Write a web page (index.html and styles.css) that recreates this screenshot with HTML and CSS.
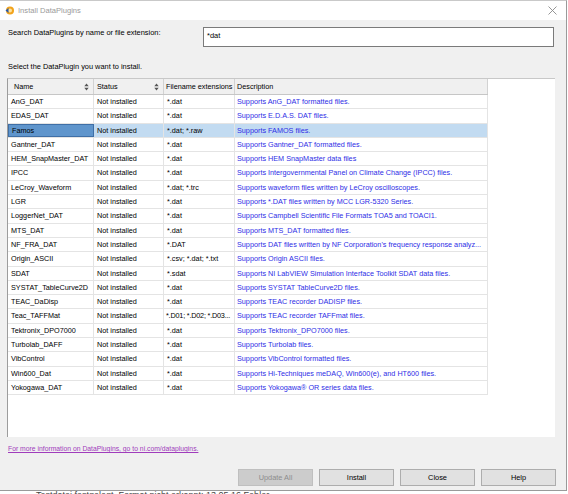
FILE: index.html
```html
<!DOCTYPE html>
<html>
<head>
<meta charset="utf-8">
<title>Install DataPlugins</title>
<link rel="stylesheet" href="styles.css">
</head>
<body>
<div class="window">
  <div class="titlebar">
    <svg class="app-icon" width="9" height="9" viewBox="0 0 9 9">
      <circle cx="5" cy="4.5" r="4" fill="#f2a31b"/>
      <circle cx="5" cy="4.5" r="2" fill="#fde2a0"/>
      <path d="M0.5 4.5 L3.5 2 L3.5 7 Z" fill="#2a5aa8"/>
    </svg>
    <span class="title">Install DataPlugins</span>
    <svg class="close" width="9" height="9" viewBox="0 0 9 9">
      <path d="M0.5 0.5 L8.5 8.5 M8.5 0.5 L0.5 8.5" stroke="#8a8a8a" stroke-width="0.9" fill="none"/>
    </svg>
  </div>
  <div class="content">
    <div class="search-row">
      <span class="search-label">Search DataPlugins by name or file extension:</span>
      <div class="search-input">*dat</div>
    </div>
    <div class="select-label">Select the DataPlugin you want to install.</div>
    <div class="list">
      <div class="row head">
        <div class="cell c-name">Name<svg class="sort" width="5" height="8" viewBox="0 0 5 8"><path d="M2.5 0.5 L4.7 3.2 L0.3 3.2 Z M2.5 7.5 L4.7 4.8 L0.3 4.8 Z" fill="#555"/></svg></div>
        <div class="cell c-status">Status<svg class="sort" width="5" height="8" viewBox="0 0 5 8"><path d="M2.5 0.5 L4.7 3.2 L0.3 3.2 Z M2.5 7.5 L4.7 4.8 L0.3 4.8 Z" fill="#555"/></svg></div>
        <div class="cell c-ext">Filename extensions</div>
        <div class="cell c-desc">Description</div>
      </div>
      <div class="row"><div class="cell c-name">AnG_DAT</div><div class="cell c-status">Not installed</div><div class="cell c-ext">*.dat</div><div class="cell c-desc">Supports AnG_DAT formatted files.</div></div>
      <div class="row"><div class="cell c-name">EDAS_DAT</div><div class="cell c-status">Not installed</div><div class="cell c-ext">*.dat</div><div class="cell c-desc">Supports E.D.A.S. DAT files.</div></div>
      <div class="row selected"><div class="cell c-name focus">Famos</div><div class="cell c-status">Not installed</div><div class="cell c-ext">*.dat; *.raw</div><div class="cell c-desc">Supports FAMOS files.</div></div>
      <div class="row"><div class="cell c-name">Gantner_DAT</div><div class="cell c-status">Not installed</div><div class="cell c-ext">*.dat</div><div class="cell c-desc">Supports Gantner_DAT formatted files.</div></div>
      <div class="row"><div class="cell c-name">HEM_SnapMaster_DAT</div><div class="cell c-status">Not installed</div><div class="cell c-ext">*.dat</div><div class="cell c-desc">Supports HEM SnapMaster data files</div></div>
      <div class="row"><div class="cell c-name">IPCC</div><div class="cell c-status">Not installed</div><div class="cell c-ext">*.dat</div><div class="cell c-desc">Supports Intergovernmental Panel on Climate Change (IPCC) files.</div></div>
      <div class="row"><div class="cell c-name">LeCroy_Waveform</div><div class="cell c-status">Not installed</div><div class="cell c-ext">*.dat; *.trc</div><div class="cell c-desc">Supports waveform files written by LeCroy oscilloscopes.</div></div>
      <div class="row"><div class="cell c-name">LGR</div><div class="cell c-status">Not installed</div><div class="cell c-ext">*.dat</div><div class="cell c-desc">Supports *.DAT files written by MCC LGR-5320 Series.</div></div>
      <div class="row"><div class="cell c-name">LoggerNet_DAT</div><div class="cell c-status">Not installed</div><div class="cell c-ext">*.dat</div><div class="cell c-desc">Supports Campbell Scientific File Formats TOA5 and TOACI1.</div></div>
      <div class="row"><div class="cell c-name">MTS_DAT</div><div class="cell c-status">Not installed</div><div class="cell c-ext">*.dat</div><div class="cell c-desc">Supports MTS_DAT formatted files.</div></div>
      <div class="row"><div class="cell c-name">NF_FRA_DAT</div><div class="cell c-status">Not installed</div><div class="cell c-ext">*.DAT</div><div class="cell c-desc">Supports DAT files written by NF Corporation's frequency response analyz...</div></div>
      <div class="row"><div class="cell c-name">Origin_ASCII</div><div class="cell c-status">Not installed</div><div class="cell c-ext">*.csv; *.dat; *.txt</div><div class="cell c-desc">Supports Origin ASCII files.</div></div>
      <div class="row"><div class="cell c-name">SDAT</div><div class="cell c-status">Not installed</div><div class="cell c-ext">*.sdat</div><div class="cell c-desc">Supports NI LabVIEW Simulation Interface Toolkit SDAT data files.</div></div>
      <div class="row"><div class="cell c-name">SYSTAT_TableCurve2D</div><div class="cell c-status">Not installed</div><div class="cell c-ext">*.dat</div><div class="cell c-desc">Supports SYSTAT TableCurve2D files.</div></div>
      <div class="row"><div class="cell c-name">TEAC_DaDisp</div><div class="cell c-status">Not installed</div><div class="cell c-ext">*.dat</div><div class="cell c-desc">Supports TEAC recorder DADISP files.</div></div>
      <div class="row"><div class="cell c-name">Teac_TAFFMat</div><div class="cell c-status">Not installed</div><div class="cell c-ext tight">*.D01; *.D02; *.D03...</div><div class="cell c-desc">Supports TEAC recorder TAFFmat files.</div></div>
      <div class="row"><div class="cell c-name">Tektronix_DPO7000</div><div class="cell c-status">Not installed</div><div class="cell c-ext">*.dat</div><div class="cell c-desc">Supports Tektronix_DPO7000 files.</div></div>
      <div class="row"><div class="cell c-name">Turbolab_DAFF</div><div class="cell c-status">Not installed</div><div class="cell c-ext">*.dat</div><div class="cell c-desc">Supports Turbolab files.</div></div>
      <div class="row"><div class="cell c-name">VibControl</div><div class="cell c-status">Not installed</div><div class="cell c-ext">*.dat</div><div class="cell c-desc">Supports VibControl formatted files.</div></div>
      <div class="row"><div class="cell c-name">Win600_Dat</div><div class="cell c-status">Not installed</div><div class="cell c-ext">*.dat</div><div class="cell c-desc">Supports Hi-Techniques meDAQ, Win600(e), and HT600 files.</div></div>
      <div class="row"><div class="cell c-name">Yokogawa_DAT</div><div class="cell c-status">Not installed</div><div class="cell c-ext">*.dat</div><div class="cell c-desc">Supports Yokogawa® OR series data files.</div></div>
    </div>
    <a class="info-link" href="#">For more information on DataPlugins, go to ni.com/dataplugins.</a>
    <div class="buttons">
      <button class="btn disabled">Update All</button>
      <button class="btn">Install</button>
      <button class="btn">Close</button>
      <button class="btn">Help</button>
    </div>
  </div>
</div>
<div class="behind"><span class="behind-text">Testdatei festgelegt, Format nicht erkannt: 13.05.16 Fehler</span></div>
</body>
</html>
```

FILE: styles.css
```css
html, body {
  margin: 0;
  padding: 0;
}
body {
  background: #ffffff;
  font-family: "Liberation Sans", Arial, sans-serif;
  font-size: 7.25px;
  color: #000;
  width: 568px;
  height: 494px;
  overflow: hidden;
}
.window {
  width: 567px;
  box-sizing: border-box;
  border-top: 1px solid #c9c9c9;
  border-right: 1px solid #9a9a9a;
  border-bottom: 1px solid #9a9a9a;
  background: #f0f0f0;
}
.titlebar {
  height: 19px;
  background: #ffffff;
  display: flex;
  align-items: center;
  padding-left: 5px;
}
.app-icon {
  display: block;
  margin-top: -1px;
}
.title {
  margin-left: 4px;
  color: #9a9a9a;
  font-size: 7.6px;
}
.close {
  display: block;
  margin-left: auto;
  margin-right: 9px;
}
.content {
  padding: 7px 0 4px 0;
}
.search-row {
  display: flex;
  align-items: flex-start;
  padding-left: 8px;
}
.search-label {
  line-height: 11px;
  width: 195px;
  font-size: 7.45px;
}
.search-input {
  width: 351px;
  height: 20px;
  box-sizing: border-box;
  background: #fff;
  border: 1px solid #7a7a7a;
  padding: 3px 0 0 3px;
  line-height: 10px;
  font-size: 7.45px;
}
.select-label {
  margin: 14px 0 0 8px;
  line-height: 12px;
  font-size: 7.4px;
}
.list {
  margin: 5px 0 0 7px;
  width: 548px;
  height: 359px;
  box-sizing: border-box;
  background: #fff;
  border-top: 1px solid #c8c8c8;
  border-left: 1px solid #9c9c9c;
}
.row {
  display: grid;
  grid-template-columns: 86px 70px 71px 253px;
  width: 480px;
  height: 14.3px;
  box-sizing: border-box;
  border-bottom: 1px solid #e4e4e4;
  line-height: 13px;
}
.row.head {
  height: 16px;
  background: #f0f0f0;
  border-bottom: 1px solid #c6c6c6;
  line-height: 15px;
}
.cell {
  border-right: 1px solid #e4e4e4;
  padding-left: 3px;
  white-space: nowrap;
  overflow: hidden;
  box-sizing: border-box;
}
.head .cell {
  border-right: 1px solid #d2d2d2;
  display: flex;
  align-items: center;
}
.head .c-name {
  padding-left: 6px;
}
.head .c-ext {
  padding-left: 2px;
}
.c-name {
  padding-left: 3px;
}
.c-ext.tight {
  letter-spacing: -0.2px;
  padding-left: 2px;
}
.c-desc {
  color: #2e2ee6;
  padding-left: 2px;
}
.head .c-desc {
  color: #000;
}
.sort {
  display: block;
  margin-left: auto;
  margin-right: 4px;
}
.row.selected {
  background: #c2dbf1;
}
.cell.focus {
  background: #5f95cc;
  border: 1px solid #3f6fa6;
  line-height: 11px;
}
.info-link {
  display: block;
  margin: 6px 0 0 8px;
  line-height: 12px;
  font-size: 6.8px;
  color: #a03cbc;
  text-decoration: underline;
  width: max-content;
}
.buttons {
  display: flex;
  justify-content: flex-end;
  gap: 6px;
  margin-top: 14px;
  padding-right: 10px;
}
.btn {
  width: 75px;
  height: 17px;
  box-sizing: border-box;
  margin: 0;
  padding: 0;
  background: #e1e1e1;
  border: 1px solid #adadad;
  font-family: "Liberation Sans", Arial, sans-serif;
  font-size: 7.4px;
  color: #000;
}
.btn.disabled {
  background: #cccccc;
  border-color: #bfbfbf;
  color: #8d8d8d;
}
.behind {
  height: 3px;
  overflow: hidden;
  background: #fff;
  padding-left: 36px;
}
.behind-text {
  display: block;
  font-size: 9px;
  line-height: 9px;
  margin-top: 0;
  color: #444;
}
```
